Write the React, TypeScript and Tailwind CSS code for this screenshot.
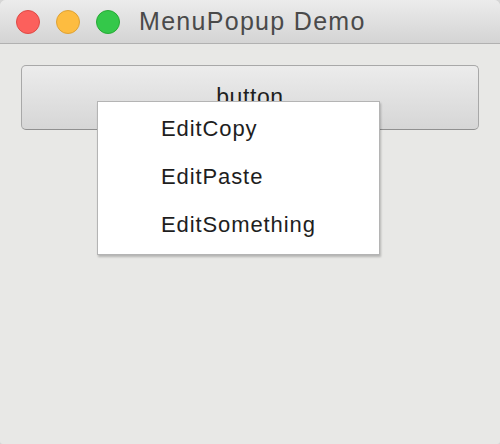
import React from 'react';

const items = ['EditCopy', 'EditPaste', 'EditSomething'];

export default function App() {
  return (
    <div className="w-[500px] h-[444px] bg-[#d6d6d6] font-['Liberation_Sans',Arial,sans-serif]">
      <div className="w-full h-full flex flex-col bg-[#e8e8e6] rounded-t-[6px] rounded-b-[3px] overflow-hidden">
        {/* Title bar */}
        <div className="h-[44px] shrink-0 flex items-center pl-[16px] bg-gradient-to-b from-[#ececec] to-[#d4d4d4] border-b border-[#b1b1b1]">
          <div className="flex items-center gap-[16px]">
            <span className="w-[24px] h-[24px] rounded-full bg-[#fc605c] border border-[#de4a45]" />
            <span className="w-[24px] h-[24px] rounded-full bg-[#fdbc40] border border-[#dea235]" />
            <span className="w-[24px] h-[24px] rounded-full bg-[#34c84a] border border-[#27aa35]" />
          </div>
          <span className="ml-[19px] text-[25px] tracking-[1.3px] text-[#4a4a4a] leading-none">MenuPopup Demo</span>
        </div>

        {/* Content */}
        <div className="px-[21px] pt-[21px]">
          <div className="relative">
            <button className="w-full h-[65px] rounded-[5px] border border-[#a8a8a8] border-b-[#909090] bg-gradient-to-b from-[#ececec] to-[#d6d6d6] text-[23px] tracking-[0.6px] text-[#1e1e1e] flex justify-center pt-[14px]">
              button
            </button>
            <div className="absolute left-[76px] top-[36px] w-[283px] bg-white border border-[#b4b4b4] shadow-[1px_2px_2px_rgba(0,0,0,0.22)] pt-[2px] pb-[6px]">
              {items.map((it) => (
                <div key={it} className="h-[48px] flex items-center pl-[63px] text-[22px] tracking-[0.9px] text-[#1e1e1e]">
                  {it}
                </div>
              ))}
            </div>
          </div>
        </div>
      </div>
    </div>
  );
}
